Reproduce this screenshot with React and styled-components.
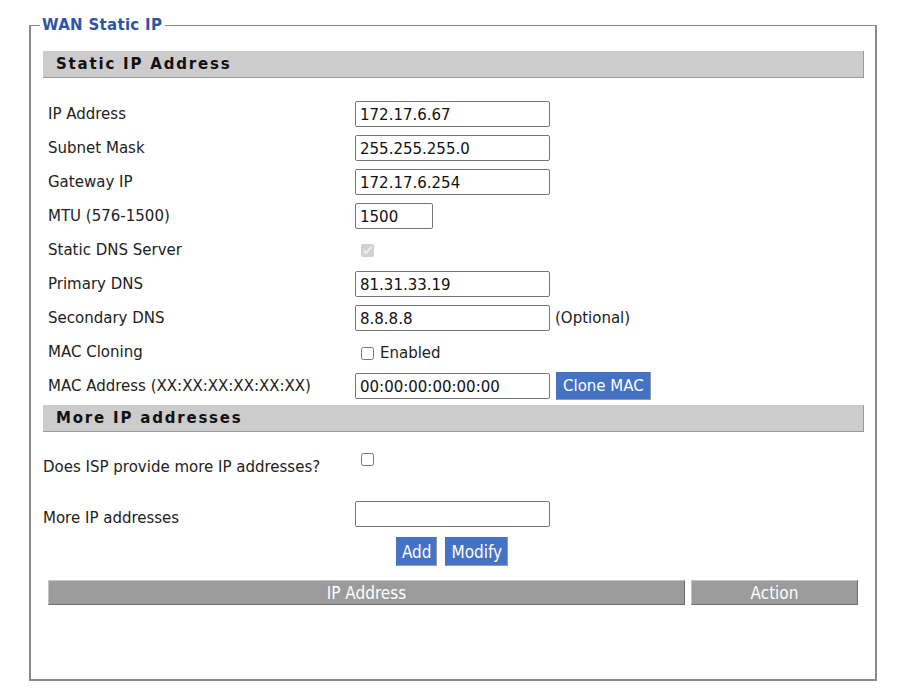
import React from "react";
import styled, { createGlobalStyle } from "styled-components";

const GlobalStyle = createGlobalStyle`
  body {
    margin: 0;
    background: #fff;
    font-family: "DejaVu Sans", Verdana, sans-serif;
    font-size: 15px;
    color: #222;
  }
`;

const basicRows = [
  { label: "IP Address", value: "172.17.6.67" },
  { label: "Subnet Mask", value: "255.255.255.0" },
  { label: "Gateway IP", value: "172.17.6.254" },
  { label: "MTU (576-1500)", value: "1500", short: true },
  { label: "Static DNS Server", check: "disabled" },
  { label: "Primary DNS", value: "81.31.33.19" },
  { label: "Secondary DNS", value: "8.8.8.8", note: "(Optional)" },
  { label: "MAC Cloning", check: "enabled" },
  { label: "MAC Address (XX:XX:XX:XX:XX:XX)", value: "00:00:00:00:00:00", clone: true },
];

export default function App() {
  return (
    <Page>
      <GlobalStyle />
      <Fieldset>
        <Legend>WAN Static IP</Legend>
        <SectionHead>Static IP Address</SectionHead>
        <Rows>
          {basicRows.map((r) => (
            <Row key={r.label}>
              <Label>{r.label}</Label>
              <Cell>
                {r.value !== undefined && (
                  <TextInput defaultValue={r.value} $short={r.short} />
                )}
                {r.note && <Note>{r.note}</Note>}
                {r.clone && <BlueButton>Clone MAC</BlueButton>}
                {r.check === "disabled" && <Check type="checkbox" checked disabled readOnly />}
                {r.check === "enabled" && (
                  <CheckLabel>
                    <Check type="checkbox" />
                    Enabled
                  </CheckLabel>
                )}
              </Cell>
            </Row>
          ))}
        </Rows>

        <SectionHead>More IP addresses</SectionHead>
        <IspRow>
          <WideLabel>Does ISP provide more IP addresses?</WideLabel>
          <Check type="checkbox" />
        </IspRow>
        <MoreRow>
          <WideLabel $drop>More IP addresses</WideLabel>
          <TextInput defaultValue="" />
        </MoreRow>
        <Buttons>
          <NarrowButton>Add</NarrowButton>
          <NarrowButton>Modify</NarrowButton>
        </Buttons>
        <TableHead>
          <HeadCell>IP Address</HeadCell>
          <HeadCell>Action</HeadCell>
        </TableHead>
      </Fieldset>
    </Page>
  );
}

const Page = styled.div`
  padding: 16px 0 0 29px;
  width: 848px;
`;

const Fieldset = styled.fieldset`
  margin: 0;
  padding: 17px 11px 0 12px;
  height: 665px;
  box-sizing: border-box;
  border-style: solid;
  border-color: #8a8a8a;
  border-width: 1px 2px 2px 2px;
`;

const Legend = styled.legend`
  padding: 0 3px 0 2px;
  margin-left: -3px;
  font-weight: bold;
  font-size: 15px;
  letter-spacing: 0.3px;
  color: #2e55a5;
`;

const SectionHead = styled.div`
  height: 27px;
  box-sizing: border-box;
  padding-left: 13px;
  background: #cccccc;
  border-bottom: 1px solid #9a9a9a;
  border-right: 1px solid #9a9a9a;
  font-weight: bold;
  font-size: 15px;
  letter-spacing: 1.8px;
  line-height: 26px;
  color: #111;
`;

const Rows = styled.div`
  padding: 19px 0 2px 0;
`;

const Row = styled.div`
  display: flex;
  align-items: center;
  height: 34px;
`;

const Label = styled.div`
  width: 307px;
  padding-left: 5px;
  flex: none;
`;

const Cell = styled.div`
  display: flex;
  align-items: center;
  gap: 6px;
`;

const TextInput = styled.input`
  width: ${(p) => (p.$short ? 78 : 195)}px;
  height: 26px;
  box-sizing: border-box;
  margin: 0;
  padding: 1px 4px 0;
  border: 1px solid #767676;
  border-radius: 2px;
  font-family: "DejaVu Sans", Verdana, sans-serif;
  font-size: 15px;
  color: #111;
`;

const Note = styled.span`
  margin-left: -1px;
`;

const Check = styled.input`
  width: 13px;
  height: 13px;
  margin: 0 0 0 6px;
`;

const CheckLabel = styled.label`
  display: flex;
  align-items: center;
  gap: 6px;
  padding-top: 2px;
`;

const BlueButton = styled.button`
  height: 28px;
  padding: 0 6px;
  background: #4472c4;
  color: #fff;
  border: 1px solid #4472c4;
  border-right-color: #9a9a9a;
  border-bottom-color: #9a9a9a;
  font-family: "DejaVu Sans", Verdana, sans-serif;
  font-size: 15px;
`;

const IspRow = styled.div`
  display: flex;
  align-items: flex-start;
  margin-top: 21px;
  height: 28px;
`;

const WideLabel = styled.div`
  width: 312px;
  flex: none;
  line-height: 18px;
  padding-top: ${(p) => (p.$drop ? 8 : 5)}px;
`;

const MoreRow = styled.div`
  display: flex;
  align-items: flex-start;
  margin-top: 20px;
`;

const Buttons = styled.div`
  display: flex;
  justify-content: center;
  gap: 8px;
  margin-top: 10px;
  padding-right: 3px;
`;

const NarrowButton = styled.button`
  height: 29px;
  padding: 0 5px;
  background: #4472c4;
  color: #fff;
  border: 1px solid #4472c4;
  border-right-color: #9a9a9a;
  border-bottom-color: #9a9a9a;
  font-family: "Liberation Sans Narrow", "DejaVu Sans Condensed", sans-serif;
  font-size: 17px;
`;

const TableHead = styled.div`
  display: grid;
  grid-template-columns: 637px 167px;
  gap: 6px;
  margin: 14px 5px 0 5px;
`;

const HeadCell = styled.div`
  height: 25px;
  box-sizing: border-box;
  background: #9b9b9b;
  color: #fff;
  text-align: center;
  line-height: 24px;
  border: 1px solid #c4c4c4;
  border-right-color: #6f6f6f;
  border-bottom-color: #6f6f6f;
  font-family: "Liberation Sans Narrow", "DejaVu Sans Condensed", sans-serif;
  font-size: 17px;
`;
